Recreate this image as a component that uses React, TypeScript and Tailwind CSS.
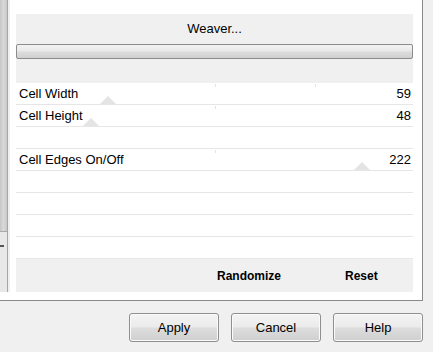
import React from "react";

type Row = { label?: string; value?: number; ticks?: number[] };

const rows: Row[] = [
  { label: "Cell Width", value: 59, ticks: [128, 192] },
  { label: "Cell Height", value: 48, ticks: [128] },
  {},
  { label: "Cell Edges On/Off", value: 222, ticks: [128] },
  {},
  {},
  {},
  {},
];

const TRACK = 397;

function SliderRow({ row }: { row: Row }) {
  const has = row.value !== undefined;
  const pos = has ? ((row.value as number) / 255) * TRACK : 0;
  return (
    <div className="relative h-[22px] border-b border-[#e6e6e6] flex items-center justify-between">
      {row.ticks?.map((t) => (
        <div
          key={t}
          className="absolute top-[1px] w-px h-[3px] bg-[#e4e4e4]"
          style={{ left: Math.round((t / 255) * TRACK) }}
        />
      ))}
      {has && (
        <svg
          className="absolute bottom-0"
          width="16"
          height="8"
          viewBox="0 0 16 8"
          style={{ left: Math.round(pos) - 8 }}
        >
          <polygon points="0,8 8,0 16,8" fill="#e4e4e4" />
        </svg>
      )}
      <span className="relative pl-[3px] text-[13px] leading-[16px] text-black">{row.label}</span>
      {has && (
        <span className="relative pr-[2px] text-[13px] leading-[16px] text-black">{row.value}</span>
      )}
    </div>
  );
}

function Btn({ children }: { children: React.ReactNode }) {
  return (
    <button className="w-[90px] h-[29px] rounded-[3px] border border-[#8e8f8f] bg-[linear-gradient(#f4f4f4_0%,#ebebeb_48%,#dddddd_52%,#cfcfcf_100%)] shadow-[inset_0_0_0_1px_#fafafa] text-[13px] text-black flex items-center justify-center">
      {children}
    </button>
  );
}

export default function App() {
  return (
    <div className="w-[433px] h-[352px] bg-[#f0f0f0] overflow-hidden font-['Liberation_Sans',Arial,sans-serif]">
      <div className="w-[423px] h-[301px] bg-white border-r border-b border-[#8a8a8a] flex pb-[8px]">
        {/* left list edge / scrollbar */}
        <div className="w-[10px] flex h-full">
          <div className="w-[7px] flex flex-col">
            <div className="h-[232px] bg-[linear-gradient(90deg,#c6c6c6,#d9d9d9_50%,#c8c8c8)] border-b border-[#a8a8a8]" />
            <div className="flex-1 bg-[#e8e8e8] relative">
              <div className="absolute left-0 top-[13px] w-[4px] h-[2px] bg-[#555]" />
            </div>
          </div>
          <div className="w-px bg-[#a6a6a6]" />
          <div className="w-[2px] bg-[#f0f0f0]" />
        </div>
        <div className="ml-[6px] w-[397px] pt-[14px] flex flex-col">
          <div className="h-[69px] bg-[#f0f0f0] pt-[7px] flex flex-col">
            <div className="h-[16px] text-center text-[13px] leading-[16px] text-black">Weaver...</div>
            <div className="mt-[7px] h-[15px] rounded-[2px] border border-[#8c8c8c] bg-[linear-gradient(#f3f3f3_0%,#e9e9e9_45%,#dcdcdc_55%,#d0d0d0_100%)]" />
          </div>
          {rows.map((r, i) => (
            <SliderRow key={i} row={r} />
          ))}
          <div className="h-[33px] bg-[#f0f0f0] flex items-center text-[12px] font-bold text-black">
            <span className="ml-[201px]">Randomize</span>
            <span className="ml-[64px]">Reset</span>
          </div>
        </div>
      </div>
      <div className="mt-[12px] flex justify-end gap-[12px] pr-[10px]">
        <Btn>Apply</Btn>
        <Btn>Cancel</Btn>
        <Btn>Help</Btn>
      </div>
    </div>
  );
}
